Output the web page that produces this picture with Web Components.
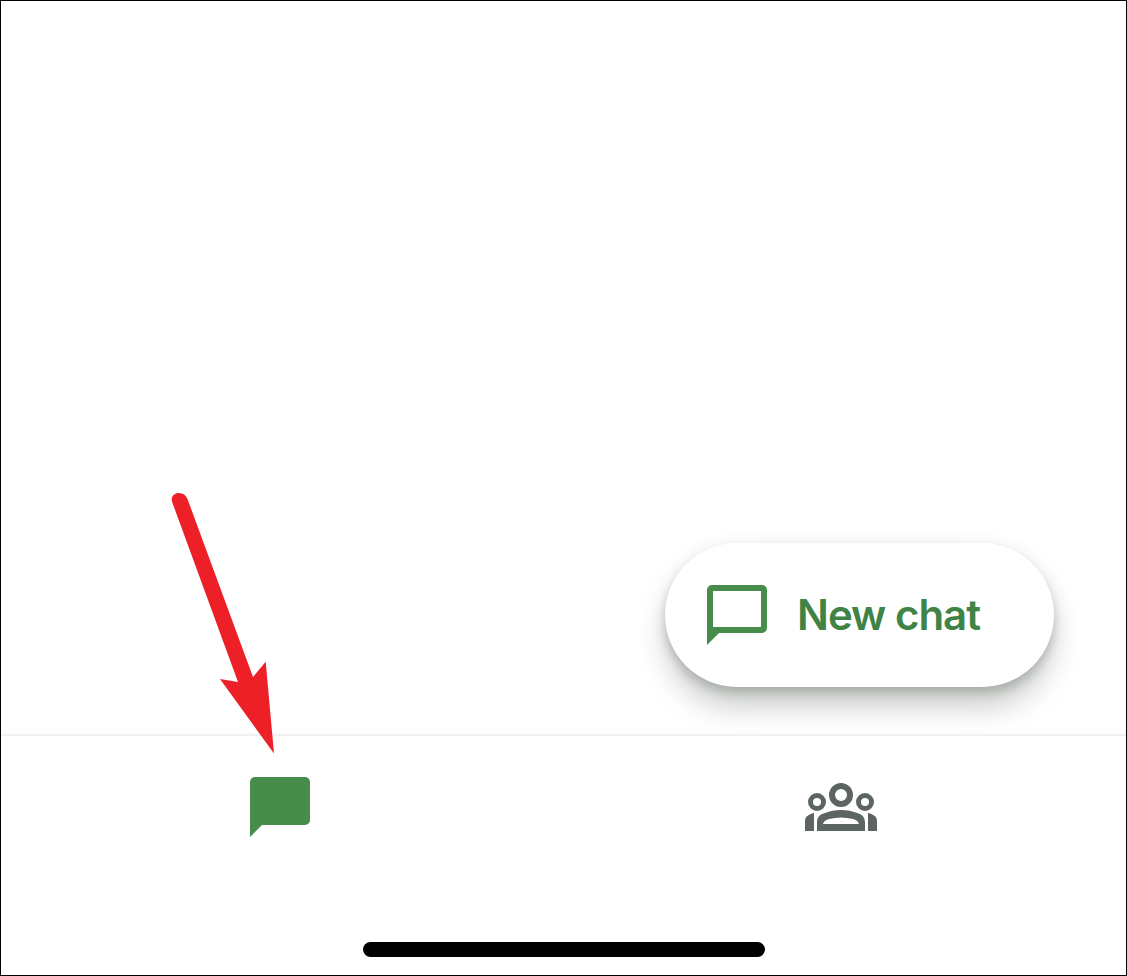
<!DOCTYPE html>
<html>
<head>
<meta charset="utf-8">
<title>Chat</title>
<style>
  html, body { margin: 0; background: #fff; }
</style>
</head>
<body>
<app-frame>
  <fab-area>
    <new-chat-button>New chat</new-chat-button>
  </fab-area>
  <tab-bar></tab-bar>
  <home-indicator></home-indicator>
  <pointer-arrow></pointer-arrow>
</app-frame>

<script>
class AppFrame extends HTMLElement {
  constructor() {
    super();
    this.attachShadow({ mode: 'open' });
    this.shadowRoot.innerHTML = `
    <style>
    :host {
      display: flex;
      flex-direction: column;
      position: relative;
      box-sizing: border-box;
      width: 1127px;
      height: 976px;
      border: 1px solid #000;
      background: #fff;
      font-family: Inter, Roboto, "Liberation Sans", sans-serif;
    }
    </style>
    <slot></slot>
    `;
  }
}
customElements.define('app-frame', AppFrame);

class FabArea extends HTMLElement {
  constructor() {
    super();
    this.attachShadow({ mode: 'open' });
    this.shadowRoot.innerHTML = `
    <style>
    :host {
      flex: 1;
      display: flex;
      justify-content: flex-end;
      align-items: flex-end;
      padding: 0 72px 47px 0;
    }
    </style>
    <slot></slot>
    `;
  }
}
customElements.define('fab-area', FabArea);

class NewChatButton extends HTMLElement {
  constructor() {
    super();
    this.attachShadow({ mode: 'open' });
    this.shadowRoot.innerHTML = `
    <style>
    :host {
      display: flex;
      align-items: center;
      box-sizing: border-box;
      width: 389px;
      height: 144px;
      padding-left: 42px;
      gap: 30px;
      border-radius: 72px;
      background: #fff;
      box-shadow: 0 6px 9px rgba(60, 70, 60, 0.2), 0 20px 28px rgba(60, 70, 60, 0.27), 0 0 18px rgba(0, 0, 0, 0.05);
      color: #3f8446;
      font-size: 42px;
      font-weight: 600;
      letter-spacing: -1px;
      line-height: 1;
    }
    svg { display: block; flex: none; }
    </style>
    <svg width="60" height="60" viewBox="0 0 60 60">
      <path fill="#478c4b" fill-rule="evenodd" d="M5 0H55a5 5 0 0 1 5 5V43a5 5 0 0 1-5 5H12L0 60V5a5 5 0 0 1 5-5ZM6 6V42H54V6Z"/>
    </svg>
    <slot></slot>
    `;
  }
}
customElements.define('new-chat-button', NewChatButton);

class TabBar extends HTMLElement {
  constructor() {
    super();
    this.attachShadow({ mode: 'open' });
    this.shadowRoot.innerHTML = `
    <style>
    :host {
      display: flex;
      justify-content: space-between;
      align-items: center;
      border-top: 2px solid #f1f1f1;
      box-shadow: 0 -3px 4px rgba(0, 0, 0, 0.012);
      padding: 41px 249px 0;
    }
    svg { display: block; }
    </style>
    <svg width="60" height="60" viewBox="0 0 60 60">
      <path fill="#478c4b" d="M5 0H55a5 5 0 0 1 5 5V43a5 5 0 0 1-5 5H12L0 60V5a5 5 0 0 1 5-5Z"/>
    </svg>
    <svg width="72" height="48" viewBox="0 0 72 48" fill="#5d6564">
      <path fill-rule="evenodd" d="M36 0a12 12 0 1 1 0 24a12 12 0 1 1 0-24ZM36 6a6 6 0 1 0 0 12a6 6 0 1 0 0-12Z"/>
      <path fill-rule="evenodd" d="M12 10a9 9 0 1 1 0 18a9 9 0 1 1 0-18ZM12 15a4 4 0 1 0 0 8a4 4 0 1 0 0-8Z"/>
      <path fill-rule="evenodd" d="M60 10a9 9 0 1 1 0 18a9 9 0 1 1 0-18ZM60 15a4 4 0 1 0 0 8a4 4 0 1 0 0-8Z"/>
      <path fill-rule="evenodd" d="M12 48V40C12 33 16 31 20 30C25 28 30 27 36 27C42 27 47 28 52 30C56 31 60 33 60 40V48ZM18 41H54C53 38 51 37 48 36C44 35 40 34.500 36 34.500C32 34.500 28 35 24 36C21 37 19 38 18 41Z"/>
      <path d="M0 48V38C0 34 3 31.500 9 30V48Z"/>
      <path d="M72 48V38C72 34 69 31.500 63 30V48Z"/>
    </svg>
    `;
  }
}
customElements.define('tab-bar', TabBar);

class HomeIndicator extends HTMLElement {
  constructor() {
    super();
    this.attachShadow({ mode: 'open' });
    this.shadowRoot.innerHTML = `
    <style>
    :host {
      display: flex;
      justify-content: center;
      padding: 105px 0 18px;
    }
    div {
      width: 402px;
      height: 15px;
      border-radius: 8px;
      background: #000;
    }
    </style>
    <div></div>
    `;
  }
}
customElements.define('home-indicator', HomeIndicator);

// annotation drawn on top of the screenshot
class PointerArrow extends HTMLElement {
  constructor() {
    super();
    this.attachShadow({ mode: 'open' });
    this.shadowRoot.innerHTML = `
    <style>
    :host {
      position: absolute;
      left: 160px;
      top: 485px;
      width: 125px;
      height: 275px;
    }
    svg { display: block; }
    </style>
    <svg width="125" height="275" viewBox="0 0 125 275">
      <path fill="#ee2027" d="M11.500 17C9 11 13 7 18 7C22 7 25 9 26.500 13L92 191L104.700 175.700L113 267.500L59 193L77 196Z"/>
    </svg>
    `;
  }
}
customElements.define('pointer-arrow', PointerArrow);
</script>
</body>
</html>
